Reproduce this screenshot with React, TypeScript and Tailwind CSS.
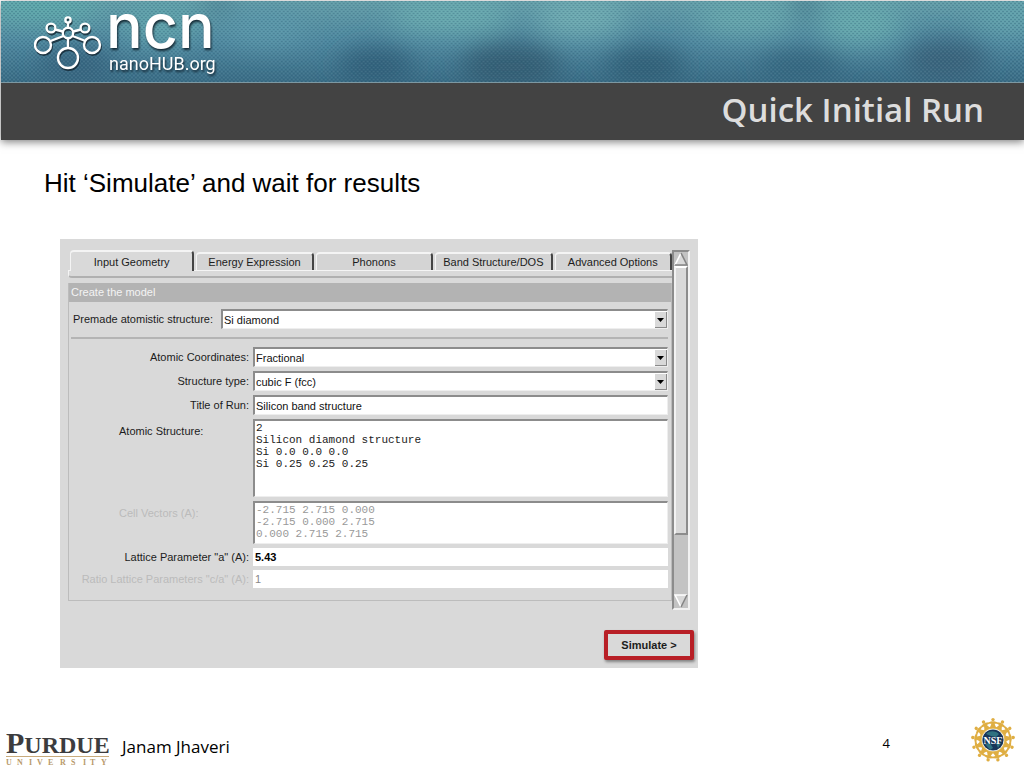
import React, { useState } from 'react';

const tabs = ['Input Geometry', 'Energy Expression', 'Phonons', 'Band Structure/DOS', 'Advanced Options'];

const atomicStructure = `2
Silicon diamond structure
Si 0.0 0.0 0.0
Si 0.25 0.25 0.25`;

const cellVectors = `-2.715 2.715 0.000
-2.715 0.000 2.715
0.000 2.715 2.715`;

const sunken = 'border-t-2 border-l-2 border-t-[#8c8c8c] border-l-[#8c8c8c] border-r border-b border-r-[#eeeeee] border-b-[#eeeeee]';

interface SelectBoxProps {
    id: string;
    options: string[];
}

const SelectBox: React.FC<SelectBoxProps> = ({ id, options }) => (
    <div className={`relative flex-1 h-5 bg-white ${sunken}`}>
        <select id={id} className="block w-full h-full appearance-none bg-white pl-px pr-4 text-[11px] leading-4 text-[#111111] outline-none">
            {options.map(o => <option key={o}>{o}</option>)}
        </select>
        <span className="absolute right-0 top-px bottom-0 w-3 flex items-center justify-center bg-[#d9d9d9] border-r border-b border-[#8a8a8a] pointer-events-none">
            <svg width="7" height="4" viewBox="0 0 7 4"><path d="M0 0h7L3.5 4z" fill="#000" /></svg>
        </span>
    </div>
);

interface FieldProps {
    id: string;
    label: string;
    top?: boolean;
    disabled?: boolean;
    children: React.ReactNode;
}

const Field: React.FC<FieldProps> = ({ id, label, top, disabled, children }) => (
    <div className={`flex gap-1 ${top ? 'items-start' : 'items-center'}`}>
        <label
            htmlFor={id}
            className={`w-44 flex-shrink-0 whitespace-nowrap leading-4 ${top ? 'pl-[46px] pt-1' : 'text-right'} ${disabled ? 'text-[#bbbbbb]' : 'text-[#1c1c1c]'}`}
        >
            {label}
        </label>
        {children}
    </div>
);

const Molecule = () => {
    const nodes = [
        [34, 20, 5.2], [17, 15, 4.4], [51, 15, 4.4], [34, 7, 2.6],
        [9, 32, 8], [58, 32, 8], [34, 45, 10],
    ];
    const shape = (
        <>
            {nodes.map(([cx, cy, r], i) => <circle key={i} cx={cx} cy={cy} r={r} />)}
            <path d="M34 9.6v5.4M21 16.5l8 2M47 16.5l-8 2M29.5 23l-13 5M38.5 23l13 5M34 25v10" />
        </>
    );
    return (
        <svg className="mt-3" width="69" height="60" viewBox="0 0 69 60" fill="none" aria-hidden="true">
            <g stroke="#10202b" strokeOpacity="0.75" strokeWidth="2.4" transform="translate(0.8 1.8)">{shape}</g>
            <g stroke="#fff" strokeWidth="2.4">{shape}</g>
        </svg>
    );
};

const BannerArt = () => (
    <svg className="absolute inset-0 w-full h-full" viewBox="0 0 1024 82" preserveAspectRatio="none" aria-hidden="true">
        <defs>
            <linearGradient id="sea" x1="0" y1="0" x2="0" y2="1">
                <stop offset="0" stopColor="#659fa9" />
                <stop offset="0.5" stopColor="#5089a0" />
                <stop offset="1" stopColor="#3a6c85" />
            </linearGradient>
            <filter id="soft" x="-30%" y="-60%" width="160%" height="220%"><feGaussianBlur stdDeviation="12" /></filter>
            <pattern id="weave" width="4" height="4" patternUnits="userSpaceOnUse">
                <path d="M0 0h2v1H0zM2 2h2v1H2z" fill="#1f4c66" fillOpacity="0.26" />
                <path d="M2 0h2v1H2zM0 2h2v1H0z" fill="#a5d5db" fillOpacity="0.1" />
            </pattern>
        </defs>
        <rect width="1024" height="82" fill="url(#sea)" />
        <g filter="url(#soft)">
            <ellipse cx="40" cy="4" rx="60" ry="18" fill="#5fa9ab" />
            <ellipse cx="75" cy="64" rx="38" ry="18" fill="#37657f" />
            <ellipse cx="160" cy="20" rx="40" ry="22" fill="#61a3ab" />
            <ellipse cx="218" cy="2" rx="14" ry="6" fill="#356a80" />
            <ellipse cx="265" cy="26" rx="40" ry="18" fill="#5b98aa" />
            <ellipse cx="375" cy="66" rx="38" ry="20" fill="#33617a" />
            <ellipse cx="450" cy="14" rx="60" ry="18" fill="#6aacb0" />
            <ellipse cx="510" cy="66" rx="50" ry="24" fill="#355e74" />
            <ellipse cx="580" cy="16" rx="45" ry="20" fill="#71adb3" />
            <ellipse cx="645" cy="66" rx="40" ry="20" fill="#336078" />
            <ellipse cx="745" cy="16" rx="50" ry="18" fill="#69a9ae" />
            <ellipse cx="805" cy="4" rx="12" ry="8" fill="#31687d" />
            <ellipse cx="800" cy="66" rx="42" ry="16" fill="#36667f" />
            <ellipse cx="860" cy="22" rx="42" ry="22" fill="#68aaae" />
            <ellipse cx="945" cy="60" rx="42" ry="22" fill="#3a637b" />
            <ellipse cx="1010" cy="14" rx="34" ry="18" fill="#62a2ac" />
        </g>
        <rect width="1024" height="82" fill="url(#weave)" />
        <rect y="81" width="1024" height="1" fill="#7d98a2" />
    </svg>
);

const NsfLogo = () => (
    <svg width="46" height="46" viewBox="-23 -23 46 46" role="img" aria-label="NSF">
        <circle r="12.4" fill="none" stroke="#e6bd5c" strokeWidth="2.4" />
        {Array.from({ length: 13 }, (_, i) => (
            <g key={i} transform={`rotate(${(i * 360) / 13})`} fill="#dfae43">
                <circle cy="-20.4" r="1.7" />
                <path d="M-4.4-17.8L-1.2-18.8h2.4L4.4-17.8 4.2-16.2 1.6-16.2 3.2-12h-6.4L-1.6-16.2-4.2-16.2z" />
            </g>
        ))}
        <circle r="10.6" fill="#183559" />
        <path d="M-7-6C-3-10 3-9 6-6L3-3-2-4zM-8 4l5-1 3 5-3 2zM3 3l5 0-3 5z" fill="#2f7180" />
        <text y="3.5" textAnchor="middle" fontSize="10" fontWeight="700" fontFamily="Liberation Serif, serif" fill="#fff">NSF</text>
    </svg>
);

const PurdueLogo = () => (
    <svg width="104" height="44" viewBox="0 0 104 44" role="img" aria-label="Purdue University">
        <text x="0" y="30" fontFamily="Liberation Serif, serif" fontWeight="700" fill="#3c3c3e">
            <tspan fontSize="30">P</tspan><tspan fontSize="24">URDUE</tspan>
        </text>
        <path d="M0 33.5h103" stroke="#c9ab7c" />
        <text y="42" x="0 11 23 31 42 54 65 77 84 95" fontSize="8" fontWeight="700" fontFamily="Liberation Serif, serif" fill="#b99a6b">UNIVERSITY</text>
    </svg>
);

const ScrollBar = () => (
    <div className="w-[18px] flex-shrink-0 flex flex-col bg-[#c3c3c3] border-2 border-t-[#8c8c8c] border-l-[#8c8c8c] border-r-[#f2f2f2] border-b-[#f2f2f2]">
        <button type="button" aria-label="Scroll up" className="h-[14px]">
            <svg width="14" height="14" viewBox="0 0 14 14">
                <path d="M7 1l6 12H1z" fill="#d9d9d9" />
                <path d="M1 13L7 1" stroke="#fff" strokeWidth="1.6" />
                <path d="M7 1l6 12H1" stroke="#858585" strokeWidth="1.6" fill="none" />
            </svg>
        </button>
        <div className="flex-1 flex flex-col">
            <div className="h-[82%] bg-[#d9d9d9] border-2 border-t-white border-l-[#f2f2f2] border-r-[#8c8c8c] border-b-[#8c8c8c]" />
        </div>
        <button type="button" aria-label="Scroll down" className="h-[14px]">
            <svg width="14" height="14" viewBox="0 0 14 14">
                <path d="M1 1h12L7 13z" fill="#d9d9d9" />
                <path d="M13 1H1l6 12" stroke="#fff" strokeWidth="1.6" fill="none" />
                <path d="M13 1L7 13" stroke="#858585" strokeWidth="1.6" />
            </svg>
        </button>
    </div>
);

const SimulationForm = () => {
    const [activeTab, setActiveTab] = useState(tabs[0]);

    return (
        <form onSubmit={e => e.preventDefault()} className="w-full max-w-[638px] bg-[#d9d9d9] pt-[11px] pb-2 font-['Liberation_Sans',Arial,sans-serif] text-[11px]">
            <div className="flex px-2">
                <div className="flex-1 min-w-0 flex flex-col pb-[9px]">
                    <div role="tablist" className="flex items-end gap-0.5 pl-0.5">
                        {tabs.map(tab => (
                            <button
                                key={tab}
                                type="button"
                                role="tab"
                                aria-selected={tab === activeTab}
                                onClick={() => setActiveTab(tab)}
                                className={`min-w-0 whitespace-nowrap leading-4 text-[#1c1c1c] rounded-t-sm border-t-2 border-l border-r-2 border-t-[#f4f4f4] border-l-[#f4f4f4] border-r-[#444444] ${tab === activeTab ? 'relative flex-[1.06] h-[21px] -mb-px bg-[#d9d9d9]' : 'flex-1 h-[18px] bg-[#d4d4d4]'}`}
                            >
                                {tab}
                            </button>
                        ))}
                    </div>
                    <div className="h-2 border-t border-l border-b-2 border-t-[#f4f4f4] border-l-[#f4f4f4] border-b-[#b0b0b0] rounded-bl-sm" />
                    <div className="mt-[5px] border border-[#bcbcbc] border-t-0 pb-3">
                        <h2 className="h-[19px] bg-[#b3b3b3] pl-0.5 leading-[19px] text-[#f4f4f4]">Create the model</h2>
                        <div className="mt-[7px] pl-1 pr-[3px] flex items-center gap-1">
                            <label htmlFor="premade" className="min-w-36 whitespace-nowrap text-[#1c1c1c]">Premade atomistic structure:</label>
                            <SelectBox id="premade" options={['Si diamond']} />
                        </div>
                        <hr className="mt-2 mr-[3px] ml-0.5 border-t-2 border-[#b4b4b4]" />
                        <div className="mt-2 pl-1 pr-[3px] flex flex-col gap-1">
                            <Field id="coords" label="Atomic Coordinates:">
                                <SelectBox id="coords" options={['Fractional']} />
                            </Field>
                            <Field id="type" label="Structure type:">
                                <SelectBox id="type" options={['cubic F (fcc)']} />
                            </Field>
                            <Field id="title" label="Title of Run:">
                                <input id="title" defaultValue="Silicon band structure" className={`flex-1 min-w-0 h-5 bg-white pl-px text-[#111111] outline-none ${sunken}`} />
                            </Field>
                            <Field id="structure" label="Atomic Structure:" top>
                                <textarea id="structure" defaultValue={atomicStructure} className={`flex-1 min-w-0 h-[78px] resize-none overflow-hidden bg-white pl-px pt-px font-['Liberation_Mono',monospace] leading-3 text-[#222222] outline-none ${sunken}`} />
                            </Field>
                            <Field id="vectors" label="Cell Vectors (A):" top disabled>
                                <textarea id="vectors" disabled defaultValue={cellVectors} className={`flex-1 min-w-0 h-[43px] resize-none overflow-hidden bg-white pl-px pt-px font-['Liberation_Mono',monospace] leading-3 text-[#999999] outline-none ${sunken}`} />
                            </Field>
                            <Field id="lattice" label={'Lattice Parameter "a" (A):'}>
                                <input id="lattice" defaultValue="5.43" className="flex-1 min-w-0 h-[18px] bg-white pl-0.5 font-bold text-black outline-none" />
                            </Field>
                            <Field id="ratio" label={'Ratio Lattice Parameters "c/a" (A):'} disabled>
                                <input id="ratio" disabled defaultValue="1" className="flex-1 min-w-0 h-[18px] bg-white pl-0.5 text-[#888888] outline-none" />
                            </Field>
                        </div>
                    </div>
                </div>
                <ScrollBar />
            </div>
            <div className="mt-5 pr-1 flex justify-end">
                <button type="submit" className="h-[30px] w-[90px] rounded-xs border-4 border-[#b81f26] bg-[#d9d9d9] text-[11px] font-bold text-[#1c1c1c] shadow-[1px_2px_3px_rgba(0,0,0,0.4)]">
                    Simulate &gt;
                </button>
            </div>
        </form>
    );
};

const App: React.FC = () => (
    <div className="min-h-screen flex flex-col bg-white pt-px font-['Liberation_Sans',Arial,sans-serif]">
        <header className="ml-px shadow-[0_2px_8px_rgba(0,0,0,0.5)]">
            <div className="relative h-[82px] overflow-hidden">
                <BannerArt />
                <a href="#" className="relative inline-flex items-start pl-[33px] text-white">
                    <Molecule />
                    <svg className="ml-1" width="120" height="82" viewBox="0 0 120 82" role="img" aria-label="ncn nanoHUB.org">
                        <g fill="#fff" className="drop-shadow-[1px_2px_1px_rgba(10,25,35,0.85)]">
                            <text x="-1" y="47" fontFamily="Inter, sans-serif" fontSize="61" fontWeight="500">ncn</text>
                            <text x="2" y="69" fontFamily="Roboto, sans-serif" fontSize="18" fontWeight="400">nanoHUB.org</text>
                        </g>
                    </svg>
                </a>
            </div>
            <div className="flex h-[57px] items-center justify-end bg-[#434343] pr-10 pb-1">
                <h1 className="font-['Open_Sans',sans-serif] text-[33px] font-semibold leading-none text-[#dddddd]">Quick Initial Run</h1>
            </div>
        </header>
        <main className="flex-1 pl-11 pr-4 pt-[27px]">
            <p className="text-[26px] leading-8 text-black">Hit ‘Simulate’ and wait for results</p>
            <div className="mt-10 pl-4">
                <SimulationForm />
            </div>
        </main>
        <footer className="flex items-end pl-1.5 pr-2 pb-px">
            <PurdueLogo />
            <span className="ml-3 pb-2 font-['Open_Sans',sans-serif] text-[17px] leading-6 text-black">Janam Jhaveri</span>
            <span className="ml-auto pb-3 font-['Open_Sans',sans-serif] text-[13px] leading-6 text-black">4</span>
            <div className="ml-20 pb-1"><NsfLogo /></div>
        </footer>
    </div>
);

export default App;
